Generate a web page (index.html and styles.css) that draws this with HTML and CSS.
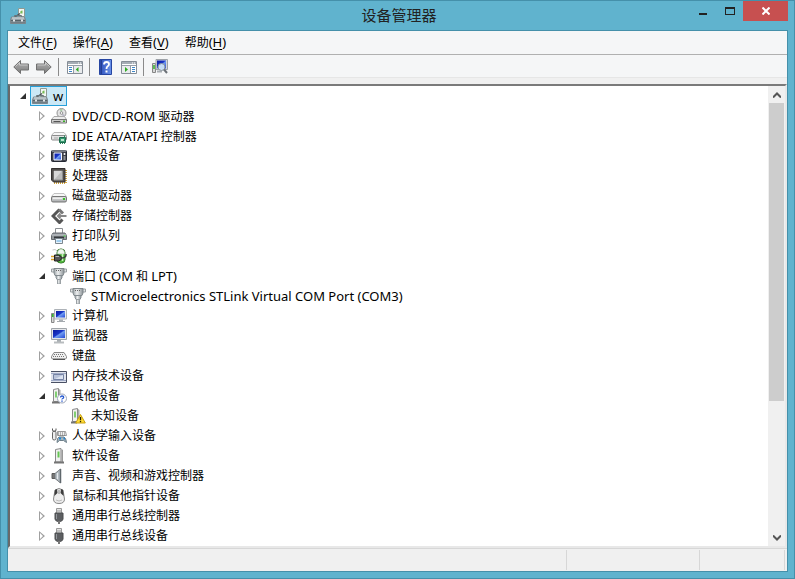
FILE: index.html
```html
<!DOCTYPE html>
<html lang="zh-CN">
<head>
    <meta charset="UTF-8">
    <meta name="viewport" content="width=device-width, initial-scale=1.0">
    <title>设备管理器</title>
    <link rel="stylesheet" href="styles.css">
</head>
<body>
    <!-- Icon sprite, every symbol is 16x16 -->
    <svg class="sprite" aria-hidden="true">
        <defs>
            <linearGradient id="g-screen" x1="0" y1="0" x2="1" y2="1"><stop offset="0" stop-color="#0a1a9c"/><stop offset=".45" stop-color="#1a35c8"/><stop offset=".55" stop-color="#6f9bf0"/><stop offset="1" stop-color="#2448d8"/></linearGradient>
            <linearGradient id="g-metal" x1="0" y1="0" x2="0" y2="1"><stop offset="0" stop-color="#e8e8e8"/><stop offset="1" stop-color="#a4a7a9"/></linearGradient>
            <linearGradient id="g-box" x1="0" y1="0" x2="0" y2="1"><stop offset="0" stop-color="#b4bdc1"/><stop offset="1" stop-color="#65727a"/></linearGradient>
            <linearGradient id="g-arrow" x1="0" y1="0" x2="0" y2="1"><stop offset="0" stop-color="#b4b4b4"/><stop offset="1" stop-color="#7d7d7d"/></linearGradient>
            <linearGradient id="g-help" x1="0" y1="0" x2="1" y2="0"><stop offset="0" stop-color="#233f9e"/><stop offset=".25" stop-color="#3b5fc6"/><stop offset="1" stop-color="#6b93ea"/></linearGradient>
            <linearGradient id="g-plug" x1="0" y1="0" x2="1" y2="0"><stop offset="0" stop-color="#9aa1a5"/><stop offset=".4" stop-color="#eef0f1"/><stop offset="1" stop-color="#8b9296"/></linearGradient>
        </defs>
        <symbol id="i-manager" viewBox="0 0 16 16">
            <path d="M8.500.500h6v8h-6z" fill="#f4f7f4" stroke="#8f9a92"/><path d="M10.500 5.500q-1-3 2-3v3z" fill="#77bb55"/><path d="M5 9l5-3.500" stroke="#4c5357" stroke-width="1.500"/>
            <path d="M4.500 9.500v-2h7v2" fill="none" stroke="#697479"/>
            <path d="M1.500 9h13l1 3v3.500H.5V12z" fill="url(#g-box)" stroke="#7b868c"/><path d="M1 12.500h14" stroke="#56636a"/><path d="M2 10h12" stroke="#d5dcdf"/><path d="M3 11.500h2v2H3zM11 11.500h2v2h-2z" fill="#e2e7e9"/>
        </symbol>
        <symbol id="i-dvd" viewBox="0 0 16 16">
            <circle cx="10.500" cy="5" r="4.500" fill="#e4e4e4" stroke="#929292"/><path d="M10.500 5l-2-4h3z" fill="#a8cba8"/><path d="M10.500 5l3.500 2-2 2z" fill="#b9b9c8"/><circle cx="10.500" cy="5" r="1.300" fill="#fff" stroke="#808080" stroke-width=".8"/>
            <path d="M3 8.500h10.500l2 3H.5z" fill="#ececec" stroke="#aaa"/><path d="M.5 11.500h15v3.500H.5z" fill="#cfcfcf" stroke="#777"/><path d="M2.500 13.500h7" stroke="#555"/><path d="M12 12.500h2v1.500h-2z" fill="#3aaf25"/>
        </symbol>
        <symbol id="i-ide" viewBox="0 0 16 16">
            <path d="M3 4.500h10l2.500 3H.5z" fill="#f6f6f6" stroke="#b5b5b5"/><rect x=".5" y="7.500" width="15" height="4.500" rx="1" fill="#e2e2e2" stroke="#8c8c8c"/><path d="M3 10h4" stroke="#aaa"/>
            <path d="M8.500 9.500h6v5h-6z" fill="#3a9a72" stroke="#1c6a4c"/><path d="M10 11h3v2h-3z" fill="#b9e8cf"/><path d="M13.500 7.500v2M9 15.500h1M11 15.500h1M13 15.500h1" stroke="#2d8a62"/>
        </symbol>
        <symbol id="i-portable" viewBox="0 0 16 16">
            <rect x=".5" y="2.500" width="15" height="11" rx="1" fill="#3d404a" stroke="#252934"/><path d="M1 3h14" stroke="#b5bac3"/><path d="M3 5h7.500v7H3z" fill="url(#g-screen)" stroke="#f3f6ff"/><circle cx="13.500" cy="6" r="1" fill="#fff"/><path d="M12.500 9h2M12.500 11h2" stroke="#ddd"/>
        </symbol>
        <symbol id="i-cpu" viewBox="0 0 16 16">
            <path d="M15 2v13M3 15h12" stroke="#d2a338" stroke-width="2" stroke-dasharray="1 1"/><path d="M.5.500h13.500v13.500H2.500l-2-2z" fill="#504d4b" stroke="#343130"/><path d="M3 3h8.500v9H3z" fill="#bbb" stroke="#8e8e8e"/><path d="M3 12V3h8z" fill="#d7d7d7"/>
        </symbol>
        <symbol id="i-disk" viewBox="0 0 16 16">
            <path d="M3 5.500h10l2.500 3H.5z" fill="#f7f7f7" stroke="#c2c2c2"/><rect x=".5" y="8.500" width="15" height="5.500" rx="1.500" fill="url(#g-metal)" stroke="#777"/><path d="M2 10.500h9" stroke="#eee"/><path d="M12 10h2v2h-2z" fill="#3bc12a"/>
        </symbol>
        <symbol id="i-storage" viewBox="0 0 16 16">
            <path d="M8.500 1.500L2 8l6.500 6.500 3-3" fill="none" stroke="#555" stroke-width="3"/><path d="M8 1.500l4 4" stroke="#777" stroke-width="3"/><path d="M6.500 8h9M9.500 5.500L7 8l2.500 2.500" fill="none" stroke="#888" stroke-width="2"/>
        </symbol>
        <symbol id="i-printer" viewBox="0 0 16 16">
            <path d="M4.500 5V.500h7V5" fill="#fff" stroke="#8a8f93"/><path d="M2 5h12l1.500 2.500v4H.5v-4z" fill="#92979b" stroke="#666b70"/><path d="M1 7h14" stroke="#c6cbd0"/><path d="M3 8.500h10v2H3z" fill="#35393d"/><path d="M4.500 10.500h7v5h-7z" fill="#e9f3fc" stroke="#7c878e"/><path d="M5.500 13h5" stroke="#54a6df"/><path d="M12.500 8h2" stroke="#43d63e"/>
        </symbol>
        <symbol id="i-battery" viewBox="0 0 16 16">
            <rect x="6" y="1" width="8" height="14" rx="3.500" fill="#52bd3e" stroke="#397a30"/><path d="M6.500 4q1-3 3.500-3t3.500 3v2h-7z" fill="#f1f7ef" stroke="#9db598" stroke-width=".6"/><path d="M11.500 6v7" stroke="#c9efbd" stroke-width="1.500"/><path d="M1.500 2q3-1.500 4.500 1" fill="none" stroke="#c7c7c7"/>
            <path d="M0 8.500h4M0 11.500h4" stroke="#d49d27" stroke-width="1.500"/><path d="M3.500 7h4q3 .5 3 3t-3 3h-4z" fill="#555" stroke="#222"/><path d="M10 10q5.500 0 5-4" fill="none" stroke="#3a3a3a" stroke-width="1.500"/><path d="M4.500 8.500h3.500" stroke="#b5b5b5"/>
        </symbol>
        <symbol id="i-port" viewBox="0 0 16 16">
            <path d="M.5 1h15v3H.5z" fill="#e2e5e6" stroke="#9a9fa2"/><path d="M3 .5h10v4.500l-1 2.500H4L3 5z" fill="url(#g-plug)" stroke="#7f878b"/><path d="M5 2.500h6" stroke="#666" stroke-dasharray="1 1"/><path d="M5 7.500h6v2L10 11.500H6L5 9.500z" fill="url(#g-plug)" stroke="#838b90"/><path d="M6.500 11.500h3V16h-3z" fill="url(#g-plug)" stroke="#9ba1a5"/>
        </symbol>
        <symbol id="i-computer" viewBox="0 0 16 16">
            <path d="M.5 5.500h2.500v9H.5z" fill="#d8d8d8" stroke="#868686"/><path d="M1.800 6v3" stroke="#31b526" stroke-width="1.500"/><path d="M3.500 1.500h12v9.500h-12z" fill="#eceef0" stroke="#adb2b8"/><path d="M5 3h9v6.500H5z" fill="url(#g-screen)"/><path d="M8 11.500h4v2H8z" fill="#aab0b5"/><path d="M6 13.500h8" stroke="#a4a9ae"/>
        </symbol>
        <symbol id="i-monitor" viewBox="0 0 16 16">
            <path d="M.5.500h15v11H.5z" fill="#e4e6e9" stroke="#a0a5aa"/><path d="M2 2h12v8H2z" fill="url(#g-screen)"/><path d="M6 12h4v2H6z" fill="#a7adb2"/><path d="M3 14.500h10" stroke="#b8bcbf" stroke-width="2"/>
        </symbol>
        <symbol id="i-keyboard" viewBox="0 0 16 16">
            <path d="M3 4.500h10l2.500 4v1.500l-1.500 1.500H2L.5 10V8.500z" fill="#f0f0f0" stroke="#888"/><path d="M3 6.500h10M2 8.500h12" stroke="#777" stroke-dasharray="1 1"/><path d="M1 10.500h14" stroke="#aaa"/><path d="M2 11.500h12" stroke="#555"/>
        </symbol>
        <symbol id="i-memory" viewBox="0 0 16 16">
            <path d="M0 3.500h15.500v11H0" fill="#dfe3ed" stroke="#4a5064"/><path d="M0 5.500h15M0 12.500h15" stroke="#9ea9c5"/><path d="M2.500 6.500h10v5h-10z" fill="#b9c3da" stroke="#7583a5"/><path d="M4 11l8-4v4z" fill="#dce3f0"/>
        </symbol>
        <symbol id="i-unit" viewBox="0 0 16 16">
            <path d="M4.500 1.500l5.500-1v13.500H4.500z" fill="#f0f0f0" stroke="#8a8a8a"/><path d="M10.500 1l1.500 1v12h-1.500z" fill="#999"/><path d="M7.500 3.500v6" stroke="#65c653" stroke-width="2"/><path d="M3 14.500h10" stroke="#757575" stroke-width="2"/>
        </symbol>
        <symbol id="i-other" viewBox="0 0 16 16">
            <path d="M2.500 1.500l5-1v13h-5z" fill="#f0f0f0" stroke="#8a8a8a"/><path d="M8 1l1.500 1v12H8z" fill="#aaa"/><path d="M5 3.500v6" stroke="#65c653" stroke-width="1.600"/><path d="M1 14.500h8" stroke="#757575" stroke-width="2"/>
            <circle cx="11" cy="10.500" r="4.500" fill="#fff" stroke="#9ba5b8"/><path d="M9.500 9.500q0-1.500 1.600-1.500t1.600 1.300q0 .7-.9 1.200t-.8 1" fill="none" stroke="#2558d0" stroke-width="1.300"/><path d="M10.300 12.500h1.400v1.300h-1.400z" fill="#2558d0"/>
        </symbol>
        <symbol id="i-unknown" viewBox="0 0 16 16">
            <path d="M2.500 1.500l5-1v13h-5z" fill="#f0f0f0" stroke="#8a8a8a"/><path d="M8 1l1.500 1v12H8z" fill="#aaa"/><path d="M5 3.500v6" stroke="#65c653" stroke-width="1.600"/><path d="M1 14.500h6" stroke="#757575" stroke-width="2"/>
            <path d="M10.500 6.500l4.800 8.500H5.700z" fill="#ffdc35" stroke="#c9a010" stroke-linejoin="round"/><path d="M10.500 9v3.200M10.500 13v1.300" stroke="#2a2100" stroke-width="1.300"/>
        </symbol>
        <symbol id="i-hid" viewBox="0 0 16 16">
            <rect x="1.500" y="3" width="3.500" height="9" rx="1.700" fill="#eee" stroke="#666"/><path d="M1.500.500v2l1.700 1L5 2.500v-2" fill="none" stroke="#555"/>
            <path d="M6.500 3.500h8l1 4h-9z" fill="#eee" stroke="#999"/><path d="M7 5h8M7 7h8" stroke="#777" stroke-dasharray="1 1"/><path d="M6 14.500q0-5 2-5.500h5q2 .5 2.500 5.500l-3-2h-4z" fill="#a5b4bd" stroke="#6c7e89"/><path d="M8 10.500h2M12.500 10.500h1.500" stroke="#2384cf" stroke-width="2"/>
        </symbol>
        <symbol id="i-sound" viewBox="0 0 16 16">
            <path d="M1 5.500h3v5H1z" fill="#777" stroke="#5b5b5b"/><path d="M4 5.500L9.500 1v14L4 10.500z" fill="#b3bbc1" stroke="#7c8184"/><path d="M9.500 1v14" stroke="#5f676c" stroke-width="1.500"/><path d="M6.500 5v6" stroke="#e7ebee"/>
        </symbol>
        <symbol id="i-mouse" viewBox="0 0 16 16">
            <path d="M4 2q4-3 8 0l1.500 9q0 4.500-5.500 4.500T2.500 11z" fill="#ededed" stroke="#888"/><path d="M4 2l2-1 .5 4L3.300 8zM12 2l-2-1-.5 4 3.200 3z" fill="#3d3d3d"/><path d="M8 2v4" stroke="#bbb" stroke-width="2"/><path d="M5 12q3 2 6 0" fill="none" stroke="#bcbcbc"/>
        </symbol>
        <symbol id="i-usb" viewBox="0 0 16 16">
            <path d="M5.500.500h5v5h-5z" fill="#e4e4e4" stroke="#999"/><path d="M7 2v2M9 2v2" stroke="#999"/><path d="M4 5h8v6q0 1.500-2.500 2.500h-3Q4 12.500 4 11z" fill="#5c5e61" stroke="#4a4c4e"/><path d="M5.500 6v5" stroke="#92959a"/><path d="M8 13v3" stroke="#777" stroke-width="2"/>
        </symbol>
        <symbol id="i-back" viewBox="0 0 16 16">
            <path d="M.8 8L7.500 1.500v3.500h8v6h-8v3.500z" fill="url(#g-arrow)" stroke="#707070"/><path d="M2.500 7.500l4-4V6h8" fill="none" stroke="#d0d0d0" stroke-width=".8"/>
        </symbol>
        <symbol id="i-forward" viewBox="0 0 16 16">
            <path d="M15.200 8L8.500 1.500v3.500h-8v6h8v3.500z" fill="url(#g-arrow)" stroke="#707070"/><path d="M1.500 6h8V3.500l4 4" fill="none" stroke="#d0d0d0" stroke-width=".8"/>
        </symbol>
        <symbol id="i-show-tree" viewBox="0 0 16 16">
            <path d="M.5 2.500h15v12H.5z" fill="#fff" stroke="#858d96"/><path d="M1 3h14v2H1z" fill="#a5adb5"/><path d="M11 4h1M13 4h1" stroke="#fff"/><path d="M1 6.500h14M6.500 7v7" stroke="#959da6"/><path d="M2 8.500h3M2 10.500h3M2 12.500h3" stroke="#3e86c7"/><path d="M7 7h8v7H7z" fill="#e9ebed"/><path d="M11.500 8v5L8.800 10.500z" fill="#2caa20"/>
        </symbol>
        <symbol id="i-action-pane" viewBox="0 0 16 16">
            <path d="M.5 2.500h15v12H.5z" fill="#fff" stroke="#858d96"/><path d="M1 3h14v2H1z" fill="#a5adb5"/><path d="M11 4h1M13 4h1" stroke="#fff"/><path d="M1 6.500h14M9.500 7v7" stroke="#959da6"/><path d="M11 8.500h3M11 10.500h3M11 12.500h3" stroke="#3e86c7"/><path d="M1 7h8v7H1z" fill="#e9ebed"/><path d="M4 8v5l3-2.500z" fill="#2caa20"/>
        </symbol>
        <symbol id="i-help" viewBox="0 0 16 16">
            <path d="M1.500.500h12v15h-12z" fill="url(#g-help)" stroke="#2746a2"/><path d="M3.500 1v14" stroke="#243f94"/><path d="M6 5.500q0-2.500 2.500-2.500t2.500 2.300q0 1.200-1.300 2T8.500 10" fill="none" stroke="#fff" stroke-width="1.800"/><path d="M7.500 11.500h2v2h-2z" fill="#fff"/>
        </symbol>
        <symbol id="i-scan" viewBox="0 0 16 16">
            <path d="M.5 4.500h3v9h-3z" fill="#d8d8d8" stroke="#868686"/><path d="M2 6v4" stroke="#31b526" stroke-width="1.500"/><path d="M4 .5h11.500v10H4z" fill="#d5d9de" stroke="#9da2a8"/><path d="M5 1.500h9v8H5z" fill="url(#g-screen)"/><path d="M5 12.500h5" stroke="#a9aeb3" stroke-width="2"/><circle cx="9.500" cy="8" r="3.500" fill="#cfe6fa" fill-opacity=".9" stroke="#8a949d"/><path d="M12 10.500l3 3.500" stroke="#6b7177" stroke-width="2"/>
        </symbol>
    </svg>

    <div class="window">
        <header class="title-bar">
            <svg class="icon"><use href="#i-manager"/></svg>
            <h1>设备管理器</h1>
            <div class="window-controls">
                <button aria-label="最小化"><svg width="8" height="8"><path d="M0 6h8v2H0z" fill="#222"/></svg></button>
                <button aria-label="最大化"><svg width="10" height="8"><path d="M0 0h10v8H0zM1 2v5h8V2z" fill="#222" fill-rule="evenodd"/></svg></button>
                <button class="close" aria-label="关闭"><svg width="8" height="8"><path d="M.5.500l7 7M7.500.500l-7 7" stroke="#fff" stroke-width="2"/></svg></button>
            </div>
        </header>

        <main class="client">
            <nav class="menu-bar">
                <button>文件<span class="latin">(<u>F</u>)</span></button>
                <button>操作<span class="latin">(<u>A</u>)</span></button>
                <button>查看<span class="latin">(<u>V</u>)</span></button>
                <button>帮助<span class="latin">(<u>H</u>)</span></button>
            </nav>

            <div class="toolbar">
                <button aria-label="后退"><svg class="icon"><use href="#i-back"/></svg></button>
                <button aria-label="前进"><svg class="icon"><use href="#i-forward"/></svg></button>
                <span class="separator"></span>
                <button aria-label="显示/隐藏控制台树"><svg class="icon"><use href="#i-show-tree"/></svg></button>
                <span class="separator"></span>
                <button aria-label="帮助"><svg class="icon"><use href="#i-help"/></svg></button>
                <button aria-label="显示/隐藏操作窗格"><svg class="icon"><use href="#i-action-pane"/></svg></button>
                <span class="separator"></span>
                <button aria-label="扫描检测硬件改动"><svg class="icon"><use href="#i-scan"/></svg></button>
            </div>

            <div class="tree-pane">
                <ul class="tree" id="tree">
                    <li>
                        <div class="row"><button class="toggle" aria-expanded="true" aria-label="w"></button><span class="label selected"><svg class="icon"><use href="#i-manager"/></svg><span class="latin">w</span></span></div>
                        <ul>
                            <li><div class="row"><button class="toggle" aria-expanded="false" aria-label="展开"></button><span class="label"><svg class="icon"><use href="#i-dvd"/></svg><span><span class="latin">DVD/CD-ROM</span> 驱动器</span></span></div></li>
                            <li><div class="row"><button class="toggle" aria-expanded="false" aria-label="展开"></button><span class="label"><svg class="icon"><use href="#i-ide"/></svg><span><span class="latin">IDE ATA/ATAPI</span> 控制器</span></span></div></li>
                            <li><div class="row"><button class="toggle" aria-expanded="false" aria-label="展开"></button><span class="label"><svg class="icon"><use href="#i-portable"/></svg>便携设备</span></div></li>
                            <li><div class="row"><button class="toggle" aria-expanded="false" aria-label="展开"></button><span class="label"><svg class="icon"><use href="#i-cpu"/></svg>处理器</span></div></li>
                            <li><div class="row"><button class="toggle" aria-expanded="false" aria-label="展开"></button><span class="label"><svg class="icon"><use href="#i-disk"/></svg>磁盘驱动器</span></div></li>
                            <li><div class="row"><button class="toggle" aria-expanded="false" aria-label="展开"></button><span class="label"><svg class="icon"><use href="#i-storage"/></svg>存储控制器</span></div></li>
                            <li><div class="row"><button class="toggle" aria-expanded="false" aria-label="展开"></button><span class="label"><svg class="icon"><use href="#i-printer"/></svg>打印队列</span></div></li>
                            <li><div class="row"><button class="toggle" aria-expanded="false" aria-label="展开"></button><span class="label"><svg class="icon"><use href="#i-battery"/></svg>电池</span></div></li>
                            <li>
                                <div class="row"><button class="toggle" aria-expanded="true" aria-label="展开"></button><span class="label"><svg class="icon"><use href="#i-port"/></svg><span>端口 <span class="latin">(COM</span> 和 <span class="latin">LPT)</span></span></span></div>
                                <ul>
                                    <li><div class="row leaf"><span class="label"><svg class="icon"><use href="#i-port"/></svg><span class="latin">STMicroelectronics STLink Virtual COM Port (COM3)</span></span></div></li>
                                </ul>
                            </li>
                            <li><div class="row"><button class="toggle" aria-expanded="false" aria-label="展开"></button><span class="label"><svg class="icon"><use href="#i-computer"/></svg>计算机</span></div></li>
                            <li><div class="row"><button class="toggle" aria-expanded="false" aria-label="展开"></button><span class="label"><svg class="icon"><use href="#i-monitor"/></svg>监视器</span></div></li>
                            <li><div class="row"><button class="toggle" aria-expanded="false" aria-label="展开"></button><span class="label"><svg class="icon"><use href="#i-keyboard"/></svg>键盘</span></div></li>
                            <li><div class="row"><button class="toggle" aria-expanded="false" aria-label="展开"></button><span class="label"><svg class="icon"><use href="#i-memory"/></svg>内存技术设备</span></div></li>
                            <li>
                                <div class="row"><button class="toggle" aria-expanded="true" aria-label="展开"></button><span class="label"><svg class="icon"><use href="#i-other"/></svg>其他设备</span></div>
                                <ul>
                                    <li><div class="row leaf"><span class="label"><svg class="icon"><use href="#i-unknown"/></svg>未知设备</span></div></li>
                                </ul>
                            </li>
                            <li><div class="row"><button class="toggle" aria-expanded="false" aria-label="展开"></button><span class="label"><svg class="icon"><use href="#i-hid"/></svg>人体学输入设备</span></div></li>
                            <li><div class="row"><button class="toggle" aria-expanded="false" aria-label="展开"></button><span class="label"><svg class="icon"><use href="#i-unit"/></svg>软件设备</span></div></li>
                            <li><div class="row"><button class="toggle" aria-expanded="false" aria-label="展开"></button><span class="label"><svg class="icon"><use href="#i-sound"/></svg>声音、视频和游戏控制器</span></div></li>
                            <li><div class="row"><button class="toggle" aria-expanded="false" aria-label="展开"></button><span class="label"><svg class="icon"><use href="#i-mouse"/></svg>鼠标和其他指针设备</span></div></li>
                            <li><div class="row"><button class="toggle" aria-expanded="false" aria-label="展开"></button><span class="label"><svg class="icon"><use href="#i-usb"/></svg>通用串行总线控制器</span></div></li>
                            <li><div class="row"><button class="toggle" aria-expanded="false" aria-label="展开"></button><span class="label"><svg class="icon"><use href="#i-usb"/></svg>通用串行总线设备</span></div></li>
                        </ul>
                    </li>
                </ul>
                <div class="scrollbar">
                    <button aria-label="向上滚动"><svg width="8" height="6"><path d="M0 5.500l4-4 4 4" fill="none" stroke="#555" stroke-width="2"/></svg></button>
                    <div class="track"><div class="thumb"></div></div>
                    <button aria-label="向下滚动"><svg width="8" height="6"><path d="M0 .5l4 4 4-4" fill="none" stroke="#555" stroke-width="2"/></svg></button>
                </div>
            </div>

            <footer class="status-bar">
                <span></span>
                <span></span>
                <span></span>
            </footer>
        </main>
    </div>

    <script>
        // Expand / collapse a branch
        document.getElementById('tree').addEventListener('click', (e) => {
            const toggle = e.target.closest('.toggle');
            if (!toggle) return;
            const children = toggle.closest('li').querySelector('ul');
            const open = toggle.getAttribute('aria-expanded') === 'true';
            toggle.setAttribute('aria-expanded', String(!open));
            if (children) children.hidden = open;
        });
    </script>
</body>
</html>
```

FILE: styles.css
```css
:root {
    --frame: #60b3ce;
    --frame-edge: #4590aa;
    --face: #f0f0f0;
    --bar: #f5f6f7;
}
* { box-sizing: border-box; }
body {
    margin: 0;
    font-family: "Noto Sans", "Noto Sans CJK SC", sans-serif;
    font-size: 12px;
    color: #000;
}
button {
    display: flex;
    align-items: center;
    justify-content: center;
    padding: 0;
    border: none;
    background: none;
    color: inherit;
    font: inherit;
}
ul { margin: 0; padding: 0; list-style: none; }
.sprite { position: absolute; width: 0; height: 0; }
.icon { width: 16px; height: 16px; flex: none; display: block; }
.latin { font-size: 13px; }

/* Window frame */
.window {
    display: flex;
    flex-direction: column;
    height: 100vh;
    padding: 0 6px 6px;
    background: var(--frame);
    border: 1px solid var(--frame-edge);
}
.title-bar {
    display: grid;
    grid-template-columns: 1fr auto 1fr;
    align-items: center;
    height: 29px;
    flex: none;
    padding-left: 3px;
}
.title-bar h1 { margin: 0; padding-bottom: 2px; font-size: 15px; font-weight: 400; line-height: 26px; color: #222; }
.window-controls { display: flex; justify-self: end; align-self: start; }
.window-controls button { width: 27px; height: 20px; }
.window-controls .close { width: 45px; background: #c75050; }

.client {
    display: flex;
    flex-direction: column;
    flex: 1;
    min-height: 0;
    background: var(--face);
    border: 1px solid var(--frame-edge);
}

/* Menu and toolbar */
.menu-bar {
    display: flex;
    gap: 16px;
    height: 24px;
    flex: none;
    padding: 0 10px 1px;
    background: var(--bar);
    border-bottom: 1px solid #b0b0b0;
}
.menu-bar u { text-underline-offset: 2px; }
.toolbar {
    display: flex;
    align-items: center;
    height: 23px;
    flex: none;
    padding: 2px 1px 0;
    background: var(--bar);
    border-bottom: 1px solid #e6e6e6;
}
.toolbar button { width: 23px; height: 20px; }
.separator { width: 1px; height: 18px; margin: 0 4px 0 3px; background: #8a8a8a; }

/* Device tree */
.tree-pane {
    display: flex;
    flex: 1;
    min-height: 0;
    margin-top: 6px;
    background: #fff;
    border: 2px solid #696969;
    border-top-color: #7a7a7a;
    border-right-color: #e8e8e8;
    border-bottom-color: #e8e8e8;
}
.tree { flex: 1; overflow: hidden; padding-left: 6px; }
.tree ul { padding-left: 19px; }
.row { display: flex; height: 20px; }
.leaf { padding-left: 14px; }
.toggle { width: 14px; height: 20px; }
.toggle::before {
    content: "";
    width: 6px;
    height: 10px;
    background: #a0a0a0;
    clip-path: polygon(0 0, 100% 50%, 0 100%, 0 0, 1px 2px, 1px 8px, 4px 5px, 1px 2px);
}
.toggle[aria-expanded="true"]::before {
    height: 6px;
    background: #303030;
    clip-path: polygon(100% 0, 100% 100%, 0 100%);
}
.label {
    display: flex;
    align-items: center;
    gap: 5px;
    padding: 0 3px 0 1px;
    border: 1px solid transparent;
    line-height: 18px;
    white-space: nowrap;
}
.selected { background: #cbe8f6; border-color: #26a0da; }

.scrollbar { display: flex; flex-direction: column; width: 17px; background: var(--face); }
.scrollbar button { height: 17px; flex: none; }
.track { flex: 1; padding: 0 1px; }
.thumb { height: 70%; background: #cdcdcd; }

/* Status bar */
.status-bar {
    display: grid;
    grid-template-columns: 1fr 133px 85px;
    height: 23px;
    flex: none;
    padding: 1px 2px 1px 0;
    border-top: 1px solid #d7d7d7;
}
.status-bar span { border-right: 1px solid #d7d7d7; }
```
